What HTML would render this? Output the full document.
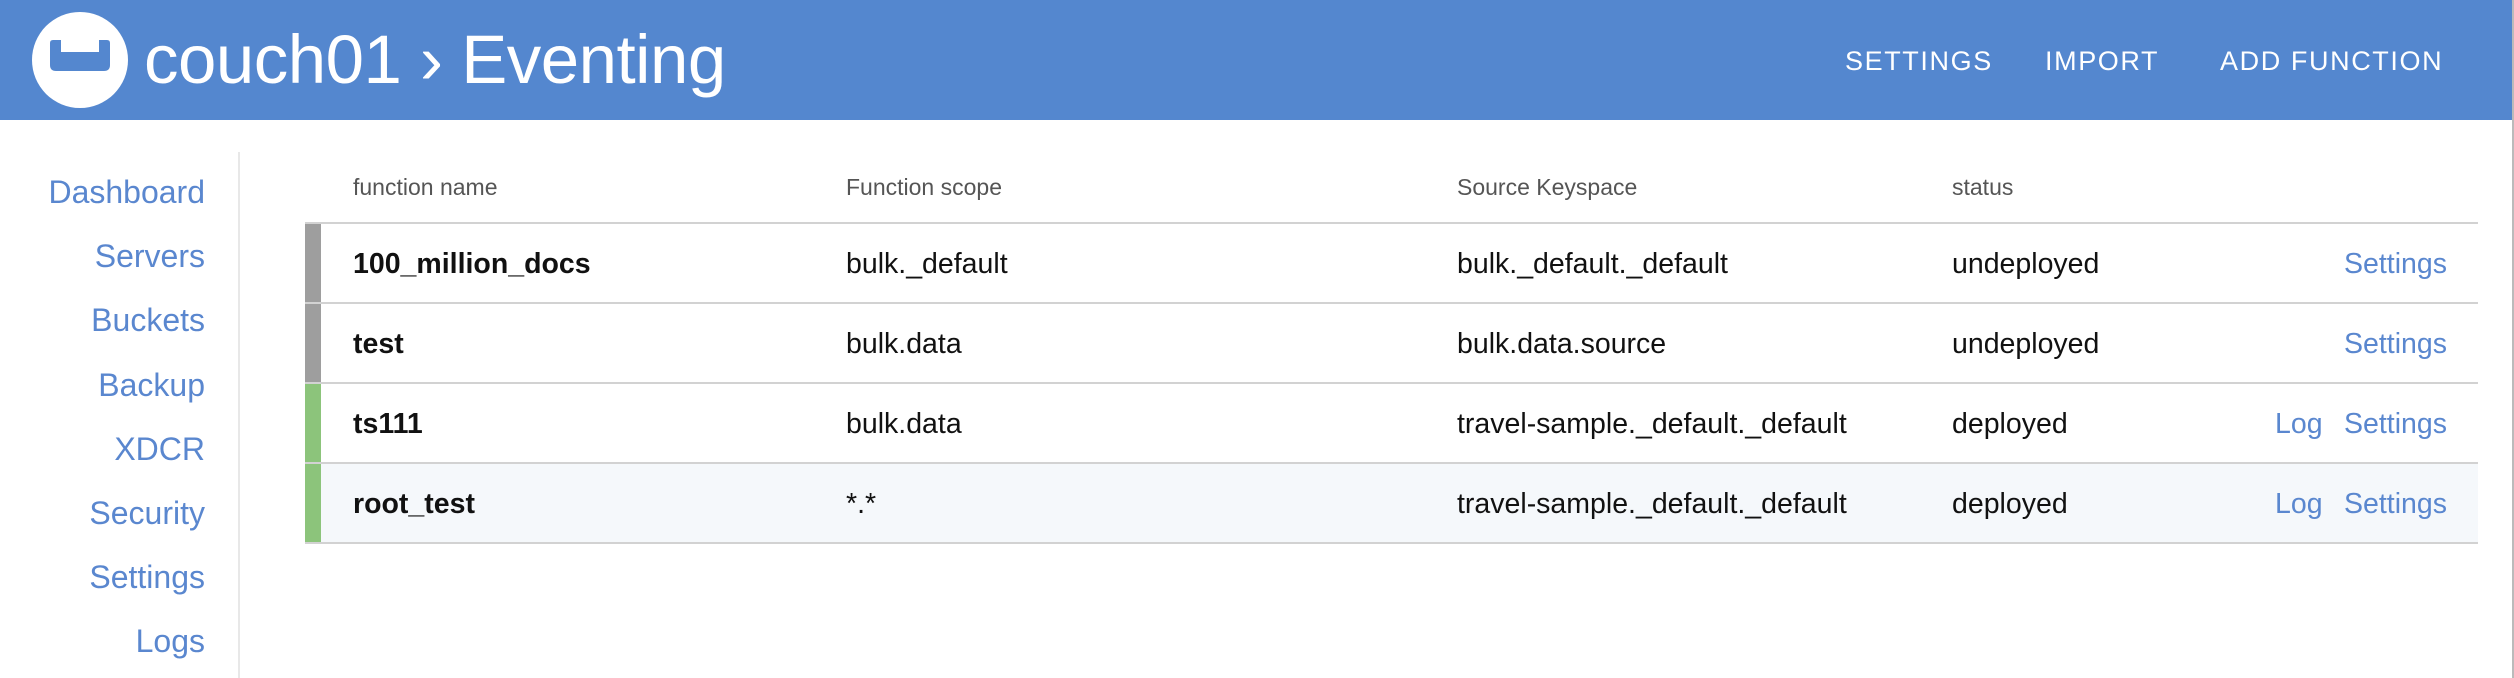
<!DOCTYPE html>
<html><head><meta charset="utf-8"><style>
*{margin:0;padding:0;box-sizing:border-box}
body{width:2514px;height:678px;background:#fff;font-family:"Liberation Sans",sans-serif;position:relative;overflow:hidden}
.hdr{position:absolute;left:0;top:0;width:2512px;height:120px;background:#5487cf}
.logo{position:absolute;left:32px;top:12px;width:96px;height:96px;border-radius:50%;background:#fff}
.title{position:absolute;left:144px;top:20px;font-size:69px;color:#fff;line-height:80px;letter-spacing:-0.5px}
.nav{position:absolute;top:45px;font-size:27px;color:#fff;letter-spacing:1.6px;line-height:32px}
.side a{position:absolute;right:2309px;font-size:32px;color:#5a87cf;line-height:36px;text-decoration:none}
.vline{position:absolute;left:238px;top:152px;width:2px;height:526px;background:#e8e8e8}
.th{position:absolute;top:173px;font-size:23px;color:#555;line-height:28px}
.hl{position:absolute;left:305px;width:2173px;height:2px;background:#d2d2d2}
.row{position:absolute;left:305px;width:2173px;height:78px}
.bar{position:absolute;left:0;top:0;width:16px;height:78px}
.c{position:absolute;top:23px;font-size:28.5px;color:#111;line-height:34px}
.b{font-weight:bold}
.lk{position:absolute;top:23px;font-size:28.5px;color:#5a87cf;line-height:34px}
.edge{position:absolute;left:2512px;top:0;width:2px;height:678px;background:#bbb}
</style></head><body>
<div class="hdr">
<div class="logo"><svg width="96" height="96" viewBox="0 0 96 96"><path d="M18 31 q0-3 3-3 h8 v12 h38 v-12 h8 q3 0 3 3 v22 q0 6 -6 6 h-48 q-6 0 -6 -6z" fill="#5487cf"/></svg></div>
<div class="title">couch01 › Eventing</div>
<div class="nav" style="left:1845px">SETTINGS</div>
<div class="nav" style="left:2045px">IMPORT</div>
<div class="nav" style="left:2220px">ADD FUNCTION</div>
</div>
<div class="edge"></div>
<div class="side">
<a style="top:174px">Dashboard</a><a style="top:238px">Servers</a><a style="top:302px">Buckets</a><a style="top:367px">Backup</a><a style="top:431px">XDCR</a><a style="top:495px">Security</a><a style="top:559px">Settings</a><a style="top:623px">Logs</a>
</div>
<div class="vline"></div>
<div class="th" style="left:353px">function name</div>
<div class="th" style="left:846px">Function scope</div>
<div class="th" style="left:1457px">Source Keyspace</div>
<div class="th" style="left:1952px">status</div>

<div class="hl" style="top:222px"></div>
<div class="row" style="top:224px"><div class="bar" style="background:#9e9e9e"></div>
<div class="c b" style="left:48px">100_million_docs</div><div class="c" style="left:541px">bulk._default</div><div class="c" style="left:1152px">bulk._default._default</div><div class="c" style="left:1647px">undeployed</div><div class="lk" style="left:2039px">Settings</div></div>
<div class="hl" style="top:302px"></div>
<div class="row" style="top:304px"><div class="bar" style="background:#9e9e9e"></div>
<div class="c b" style="left:48px">test</div><div class="c" style="left:541px">bulk.data</div><div class="c" style="left:1152px">bulk.data.source</div><div class="c" style="left:1647px">undeployed</div><div class="lk" style="left:2039px">Settings</div></div>
<div class="hl" style="top:382px"></div>
<div class="row" style="top:384px"><div class="bar" style="background:#8cc47b"></div>
<div class="c b" style="left:48px">ts111</div><div class="c" style="left:541px">bulk.data</div><div class="c" style="left:1152px">travel-sample._default._default</div><div class="c" style="left:1647px">deployed</div><div class="lk" style="left:1970px">Log</div><div class="lk" style="left:2039px">Settings</div></div>
<div class="hl" style="top:462px"></div>
<div class="row" style="top:464px;background:#f5f8fb"><div class="bar" style="background:#8cc47b"></div>
<div class="c b" style="left:48px">root_test</div><div class="c" style="left:541px">*.*</div><div class="c" style="left:1152px">travel-sample._default._default</div><div class="c" style="left:1647px">deployed</div><div class="lk" style="left:1970px">Log</div><div class="lk" style="left:2039px">Settings</div></div>
<div class="hl" style="top:542px"></div>
</body></html>
